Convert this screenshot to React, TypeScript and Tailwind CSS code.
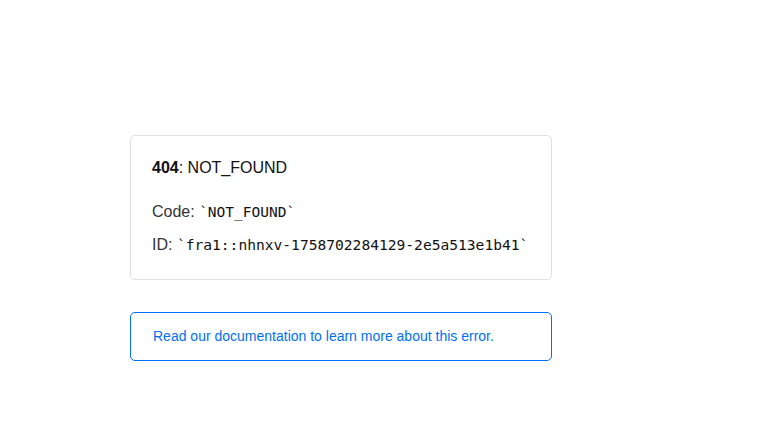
export default function App() {
  const mono = { fontFamily: '"DejaVu Sans Mono", "Liberation Mono", monospace' };
  return (
    <div className="min-h-[437px] w-full bg-white" style={{ fontFamily: '"Liberation Sans", Arial, sans-serif' }}>
      <div className="ml-[130px] pt-[135px] w-[422px] flex flex-col gap-[32px]">
        <div className="border border-[#e0e0e0] rounded-[5px] px-[21px] pt-[20px] pb-[22px] text-[#111]">
          <div className="text-[16px] leading-[24px]">
            <span className="font-bold">404</span>: NOT_FOUND
          </div>
          <div className="mt-[20px] text-[16px] leading-[24px] text-[#333]">
            Code: <span className="text-[#111] text-[14.5px]" style={mono}>`NOT_FOUND`</span>
          </div>
          <div className="mt-[9px] text-[16px] leading-[24px] text-[#333]">
            ID: <span className="text-[#111] text-[14.6px]" style={mono}>`fra1::nhnxv-1758702284129-2e5a513e1b41`</span>
          </div>
        </div>
        <div className="border border-[#0070f3] rounded-[5px] px-[22px] h-[49px] flex items-center">
          <a className="text-[#0070f3] text-[14px]">Read our documentation to learn more about this error.</a>
        </div>
      </div>
    </div>
  );
}
